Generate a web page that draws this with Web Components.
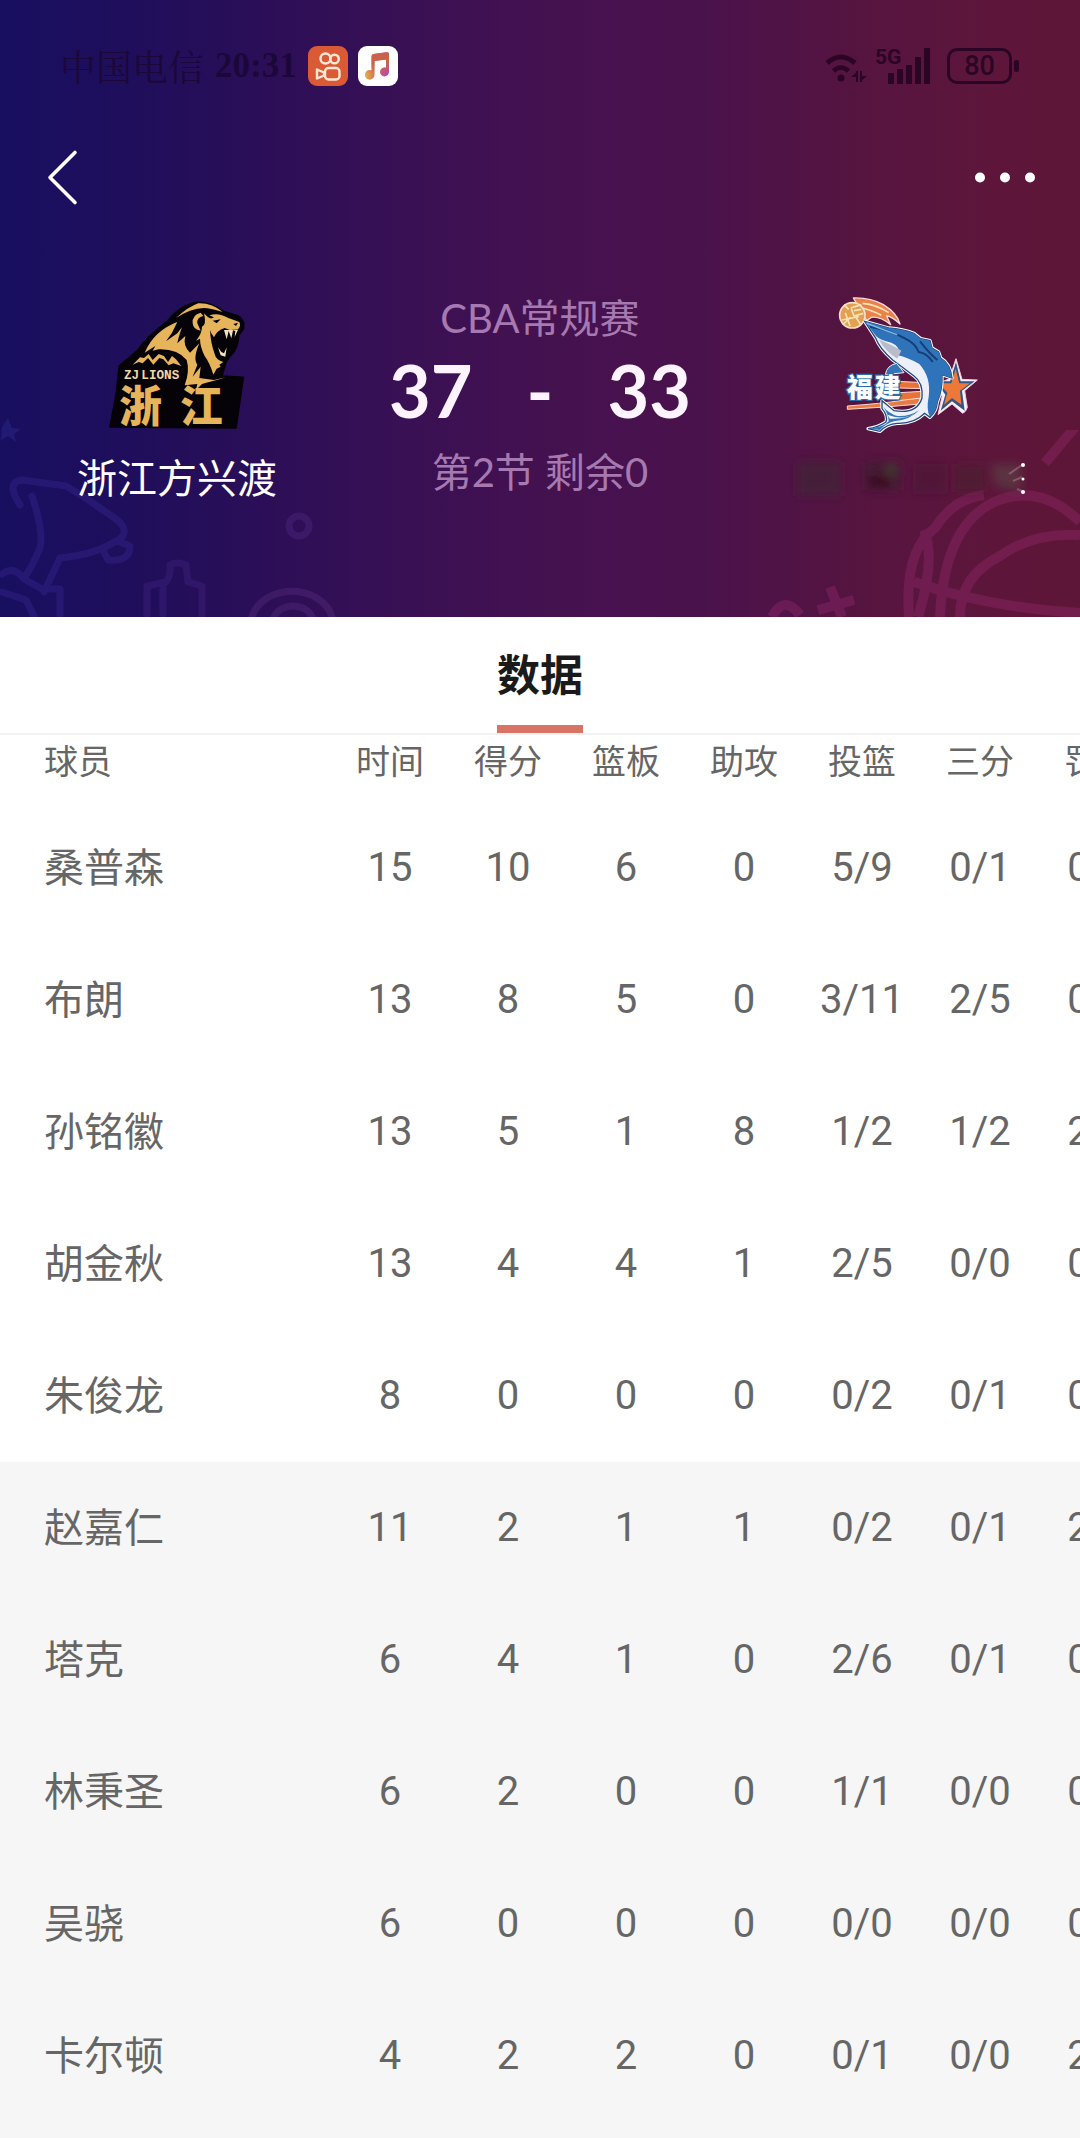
<!DOCTYPE html>
<html lang="zh-CN">
<head>
<meta charset="utf-8">
<meta name="viewport" content="width=device-width, initial-scale=1">
<title>CBA常规赛 数据</title>
<style>
html{background:#f6f6f6}
body{margin:0;min-height:100vh;font-family:Lato,"Noto Sans CJK SC",sans-serif;color:#666;overflow-x:hidden}
</style>
</head>
<body>
<game-page></game-page>
<script>
const define = (name, html, setup) => {
  const tpl = document.createElement('template');
  tpl.innerHTML = html;
  customElements.define(name, class extends HTMLElement {
    constructor() {
      super();
      this.attachShadow({ mode: 'open' }).appendChild(tpl.content.cloneNode(true));
    }
    connectedCallback() { if (setup) setup.call(this, this.shadowRoot); }
  });
};

define('status-bar', `
<style>
:host{display:flex;justify-content:space-between;align-items:center;height:132px;padding:0 61px 0 60px;color:#1c0838}
.side{display:flex;align-items:center}
.left{gap:11px}
.carrier{font:400 36px/40px "Noto Serif CJK SC","Noto Sans CJK SC",sans-serif}
.time{font:700 35px/40px "Liberation Serif",serif}
.apps{display:flex;gap:10px}
svg{display:block}
.right{color:#2b0526}
.cell{display:flex;margin-left:7px;align-items:flex-start}
.gen{font:700 21px/20px Roboto,sans-serif;width:26px;height:38px}
.bars{margin:0 0 0 -13px}
.batt{box-sizing:border-box;width:65px;height:36px;border:3px solid currentColor;border-radius:10px;margin-left:16px;font:500 27px/30px Roboto,sans-serif;text-align:center}
.nub{width:5px;height:12px;border-radius:2px;background:currentColor;margin-left:2px}
</style>
<div class="side left">
  <span class="carrier">中国电信</span><span class="time">20:31</span>
  <span class="apps">
    <svg width="40" height="40" viewBox="0 0 40 40"><rect width="40" height="40" rx="9" fill="#d95a35"/><g fill="none" stroke="#ffe9d6" stroke-width="2.4" stroke-linejoin="round"><circle cx="17.5" cy="12.5" r="5"/><circle cx="26.500" cy="13" r="4.300"/><rect x="17" y="22" width="14.500" height="11.500" rx="3.500"/><path d="M9 23.500l7 3v3l-7 3z"/></g></svg>
    <svg width="40" height="40" viewBox="0 0 40 40"><defs><linearGradient id="m" x1="0" y1="1" x2="1" y2="1"><stop offset="0" stop-color="#e5b54a"/><stop offset=".5" stop-color="#d0655a"/><stop offset="1" stop-color="#b044bb"/></linearGradient><linearGradient id="n" x1="0" y1="0" x2="0" y2="1"><stop offset="0" stop-color="#c9644a"/><stop offset=".4" stop-color="#c9644a"/><stop offset=".8" stop-color="#c9644a" stop-opacity="0"/></linearGradient></defs><rect width="40" height="40" rx="9" fill="#fff"/><path d="M13.500 10.500q0-2 2-2.400l13-1.800q2.500-.3 2.500 2V26a4.500 4.500 0 1 1-3-4.300V13.500l-11.500 1.600V29a4.800 4.800 0 1 1-3-4.600z" fill="url(#m)"/><path d="M13.500 10.500q0-2 2-2.400l13-1.800q2.500-.3 2.500 2V26a4.500 4.500 0 1 1-3-4.300V13.500l-11.500 1.600V29a4.800 4.800 0 1 1-3-4.600z" fill="url(#n)"/></svg>
  </span>
</div>
<div class="side right">
  <svg width="42" height="38" viewBox="0 0 42 38" fill="none" stroke="currentColor"><path d="M1 16Q15 4 29 16" stroke-width="5"/><path d="M7.500 24q7.500-7 15 0" stroke-width="4.500"/><circle cx="15" cy="31" r="3.500" fill="currentColor" stroke="none"/><path d="M31 24v11M35 24v11" stroke-width="2"/><path d="M25 30l6-5v5zM41 29l-6 5v-5z" fill="currentColor" stroke="none"/></svg>
  <div class="cell"><span class="gen">5G</span>
  <svg class="bars" width="43" height="38" viewBox="0 0 43 38" fill="currentColor"><rect y="26" width="6" height="11"/><rect x="9" y="22" width="6" height="15"/><rect x="18" y="18" width="6" height="19"/><rect x="27" y="10" width="6" height="27"/><rect x="36" y="1" width="6" height="36"/></svg></div>
  <div class="batt">80</div><div class="nub"></div>
</div>`);

define('nav-bar', `
<style>
:host{display:flex;justify-content:space-between;align-items:center;height:92px;padding:0 44px}
button{border:0;background:none;padding:0;color:#fff;cursor:pointer}
svg{display:block}
</style>
<button aria-label="返回"><svg width="36" height="60" viewBox="0 0 36 60" fill="none" stroke="#fff" stroke-width="3.600" stroke-linecap="round" stroke-linejoin="round"><path d="M31 4.500L6 29.500l25 25"/></svg></button>
<button aria-label="更多"><svg width="62" height="60" viewBox="0 0 62 60" fill="#fff"><circle cx="6" cy="29.500" r="5"/><circle cx="31" cy="29.500" r="5"/><circle cx="56" cy="29.500" r="5"/></svg></button>`);

define('lions-logo', `
<style>
:host{display:block}
svg{display:block;overflow:visible}
.city{font:900 128px "Noto Sans CJK SC",sans-serif;fill:#e6b45a}
.club{font:700 38px "Liberation Mono",monospace;fill:#efd9a6}
</style>
<svg width="150" height="130" viewBox="36 60 450 390" role="img" aria-label="浙江">
<path d="M60 441L78 345 88 258 142 212Q170 170 232 124 264 82 312 68 355 62 400 94L445 108Q467 124 460 148L446 166Q444 204 424 224L409 244 396 288 460 292 438 444Z" fill="#050208" stroke="#050208" stroke-width="5" stroke-linejoin="round"/>
<g fill="#e6b45a">
<path d="M258 114Q295 80 325 70 365 68 398 96 360 84 342 84 300 86 258 114Z"/>
<path d="M308 130Q306 104 332 98L340 108Q320 112 322 130L332 152Q310 150 308 130Z"/>
<path d="M342 100Q360 122 372 112L358 106Q385 96 415 114L448 126Q454 138 444 148L420 150 404 144Q380 152 372 172 362 160 360 150 362 190 374 222 378 240 400 246L388 254 392 260 380 266 370 284Q360 250 344 228 330 200 330 176L318 182Q336 160 336 140 350 136 342 100Z"/>
<path d="M164 218Q192 152 262 126L246 158 228 184 262 160 276 142Q264 176 262 190L286 168Q278 198 300 218L328 190Q308 236 322 254L308 290 332 260 328 294 372 300 408 292Q366 304 336 312L318 330 322 312 284 316Q300 274 290 240 262 206 206 208L188 212 196 198Z"/>
<path d="M128 254L150 232 162 234 176 222 188 240 206 222 222 228 234 246 246 228 258 238 274 258 250 250 236 256 220 238 208 234 190 254 174 234 158 250 146 246Z"/>
</g>
<path d="M368 122l24-4-12 12zM430 132l14-4-6 10z" fill="#050208"/>
<path d="M402 150l8 28 6-25 8 22 5-24 7 2-2 18 10-22zM384 202l8 24 14 4 4-28-8 18-8-4z" fill="#f3e4bb"/>
<text class="club" x="102" y="298">ZJ</text>
<text class="club" x="154" y="298">LIONS</text>
<text class="city" x="88" y="425">浙</text><text class="city" x="270" y="425">江</text>
</svg>`);

define('marlin-logo', `
<style>
:host{display:block}
svg{display:block;overflow:visible}
text{font:900 78px "Noto Sans CJK SC",sans-serif}
</style>
<svg width="150" height="130" viewBox="24 60 450 390" role="img" aria-label="福建">
<path d="M100 54Q150 52 190 74 232 100 240 132 214 108 200 108L212 134Q180 108 154 112L140 122Z" fill="#e8844a" stroke="#fbd9d4" stroke-width="4" stroke-linejoin="round"/>
<path d="M128 70Q170 74 206 98M126 84Q160 92 184 106" fill="none" stroke="#ffe2b8" stroke-width="5"/>
<circle cx="97" cy="106" r="38" fill="#e2a052" stroke="#f7dfca" stroke-width="5"/>
<path d="M92 84l32-10M94 86l8 22 28-8M76 98l14 40M108 112l14 22M66 120l50-10M72 74l14 14M68 134l24-22M102 92l22-4" stroke="#fbe3b4" stroke-width="5" fill="none"/>
<path d="M408 236L426 298 472 300 434 332 442 382Q438 396 428 400L396 372 354 404 366 350 356 310 388 296Z" fill="#f7f2fb" stroke="#f6c8dc" stroke-width="3"/>
<path d="M408 246L422 304 464 304 426 332 434 392 396 364 362 392 376 344 348 304 390 304Z" fill="#355685"/>
<path d="M407 266L418 310 450 310 420 332 424 374 396 354 372 374 382 338 356 310 394 310Z" fill="#ee7837"/>
<path d="M82 378Q190 370 240 362L300 344V372Q200 382 82 388Z" fill="#e87b43" stroke="#fbd9d4" stroke-width="3"/>
<path d="M230 304L316 308V326L236 324ZM238 338L308 334 304 354 236 362Z" fill="#e87338" stroke="#fbd9d4" stroke-width="3"/>
<path d="M134 124L206 144Q250 148 282 160L302 176 330 182 336 204 356 216 362 234Q392 252 396 294L366 284Q368 330 352 366 350 394 330 412L314 400Q282 432 232 430 200 432 180 454L144 446Q174 442 198 426 204 406 186 386L186 362 222 392Q290 404 306 354 310 308 282 288 248 262 218 240 178 204 168 176Z" fill="#f7f5fc" stroke="#fff" stroke-width="10" stroke-linejoin="round"/>
<path d="M134 124L206 144Q250 148 282 160L302 176 330 182 336 204 356 216 362 234Q392 252 396 294L366 284Q368 330 352 366 350 394 330 412L314 400Q282 432 232 430 200 432 180 454L144 446Q174 442 198 426 204 406 186 386L186 362 222 392Q290 404 306 354 310 308 282 288 248 262 218 240 178 204 168 176Z" fill="#eef0f9" stroke="#234a80" stroke-width="4"/>
<path d="M134 124L206 144Q250 148 282 160L302 176 330 182 336 204 356 216 362 234Q392 252 396 294L366 284Q368 330 352 366 350 394 330 410 318 390 326 350 334 292 298 252 262 232 234 226 244 200 214 188 180 180 168 168Z" fill="#2f74bb"/>
<path d="M150 140Q210 150 256 176 286 190 296 216 322 220 338 246M300 184Q330 222 352 240" fill="none" stroke="#153e77" stroke-width="6"/>
<path d="M140 130Q190 150 232 164" stroke="#77b6e0" stroke-width="5" fill="none"/>
<path d="M176 178Q196 216 232 236L244 212Q218 196 176 178Z" fill="#b8bccb"/>
<path d="M196 284Q200 256 230 250L252 278Z" fill="#3375b5" stroke="#e5f0fa" stroke-width="3"/>
<path d="M150 446Q194 440 206 424 206 404 190 380 206 400 232 408 270 410 298 390 270 420 222 424 198 430 180 450Z" fill="#3477b7"/>
<path d="M202 404Q254 424 292 396 264 418 210 416Z" fill="#f6f6fc"/>
<g fill="#fff" stroke="#2c6fa7" stroke-width="7" paint-order="stroke"><text x="80" y="350">福</text><text x="164" y="350">建</text></g>
</svg>`);

define('team-card', `
<style>
:host{display:flex;flex-direction:column;align-items:center;gap:24px;padding-top:6px;color:#fff}
.name{font-size:40px;line-height:48px;white-space:nowrap}
</style>
<slot name="logo"></slot><div class="name"><slot></slot></div>`);

define('masked-name', `
<style>:host{display:block}svg{display:block;overflow:visible}</style>
<svg width="240" height="48" viewBox="-8 0 240 48" aria-hidden="true">
<defs><filter id="b" x="-20%" y="-50%" width="140%" height="200%"><feGaussianBlur stdDeviation="4"/></filter></defs>
<g filter="url(#b)"><rect x="6" y="8" width="44" height="34" fill="#3d2334" opacity=".6"/><rect x="74" y="8" width="36" height="28" fill="#38202e" opacity=".6"/><circle cx="100" cy="16" r="7" fill="#45402e" opacity=".7"/><rect x="78" y="22" width="20" height="12" fill="#3a0720"/><rect x="122" y="10" width="34" height="30" fill="#45152f" opacity=".5"/><rect x="164" y="10" width="30" height="28" fill="#47202b" opacity=".6"/><path d="M200 10h30v28l-26-6z" fill="#5a3040"/></g>
<path d="M218 20l13-9M222 27l9-4M226 35l5 2" stroke="#c993ad" stroke-width="2" opacity=".4"/><g fill="#fff"><circle cx="232" cy="11" r="2"/><circle cx="232" cy="25" r="1.500"/><circle cx="232" cy="38" r="2"/></g>
</svg>`);

define('score-board', `
<style>
:host{display:flex;flex-direction:column;align-items:center;color:#a679b0;font-size:40px;line-height:48px;white-space:nowrap}
.score{display:flex;justify-content:center;gap:54px;color:#fdf4ff;font-size:72px;font-weight:700;line-height:96px;height:106px}
</style>
<div><slot name="league"></slot></div>
<div class="score"><slot name="home"></slot><span>-</span><slot name="away"></slot></div>
<div><slot name="clock"></slot></div>`);

define('hero-art', `
<style>
:host{position:absolute;inset:0;overflow:hidden;display:flex;justify-content:space-between;align-items:flex-end;pointer-events:none}
svg{display:block;flex:none}
</style>
<svg width="360" height="217" viewBox="0 0 360 217" fill="none" stroke="#4432a8" stroke-opacity=".28" stroke-width="7" stroke-linejoin="round" stroke-linecap="round">
<path d="M2 27l6-9 4 10 9 1-7 5 2 8-8-6-7 4z" fill="#33309f" stroke="none" fill-opacity=".35"/>
<path d="M20 105Q5 82 22 80L66 86 84 97M32 96Q44 132 40 148 33 165 26 175M84 97L116 119Q132 132 117 141L130 146Q130 162 108 160L104 152M116 141Q94 155 60 158L44 192M2 174q12-9 22 5l18 10 18 0v26M2 192l24 8 8 16"/>
<path d="M147 217V186L166 182Q171 176 170 165 177 161 186 165L188 182 202 186V217M163 188v26" stroke="#573299" stroke-opacity=".24"/>
<circle cx="299" cy="126" r="10" stroke="#56338d" stroke-opacity=".32"/>
<path d="M252 217a41 33 0 0 1 80 0M274 217a20 16 0 0 1 38 0" stroke="#67398c" stroke-opacity=".3" stroke-width="7"/>
</svg>
<svg width="340" height="187" viewBox="0 0 340 187" fill="none" stroke="#9c2d74" stroke-opacity=".34" stroke-width="10">
<path d="M305 33L336-4M169 187Q164 120 195 98 214 68 244 65M184 100Q196 130 178 187M200 187Q204 96 254 72 300 52 340 92M220 187Q220 146 260 126 294 102 340 105M174 152Q245 177 340 183"/>
<path d="M32 187q12-23 28-2M78 180l36-10M90 157l12 30"/>
</svg>`);

define('match-hero', `
<style>
:host{display:block;position:relative;color:#fff;background:linear-gradient(90deg,#180f60 0%,#1f0e5c 12%,#2b0e58 24%,#371054 36%,#441150 50%,#4a124c 65%,#551440 79%,#5d163b 91%,#5d1637 100%)}
.content{position:relative}
.match{display:grid;grid-template-columns:19fr 20fr 19fr;padding:70px 0 115px}
</style>
<hero-art></hero-art>
<div class="content">
<status-bar></status-bar>
<nav-bar></nav-bar>
<div class="match">
  <team-card><lions-logo slot="logo"></lions-logo>浙江方兴渡</team-card>
  <score-board><span slot="league">CBA常规赛</span><span slot="home">37</span><span slot="away">33</span><span slot="clock">第2节 剩余0</span></score-board>
  <team-card><marlin-logo slot="logo"></marlin-logo><masked-name></masked-name></team-card>
</div>
</div>`);

define('tab-strip', `
<style>
:host{display:flex;justify-content:center;background:#fff;border-bottom:2px solid #f2f2f2}
button{height:116px;padding:8px 0 0;border:0;border-bottom:8px solid #d87466;background:none;color:#1a1a1a;font:700 43px/60px Lato,"Noto Sans CJK SC",sans-serif;cursor:pointer}
</style>
<button role="tab" aria-selected="true"><slot></slot></button>`);

define('player-stats', `
<style>
:host{display:block;overflow-x:auto;scrollbar-width:none;color:#666}
:host::-webkit-scrollbar{display:none}
table{table-layout:fixed;width:1157px;border-collapse:collapse}
.who{width:331px}
th,td{box-sizing:border-box;padding:0;text-align:center;font-weight:400;white-space:nowrap}
thead,.start{background:#fff}
thead th{height:67px;padding-top:2px;vertical-align:top;font-size:34px;line-height:48px}
tbody th,tbody td{height:132px;font-size:40px;line-height:48px}
tbody th{padding-bottom:2px}
tbody td{font-family:Roboto,sans-serif}
th:first-child{text-align:left;padding-left:44px}
.bench{background:#f6f6f6}
</style>
<table><colgroup><col class="who"><col span="7"></colgroup><thead><tr></tr></thead><tbody class="start"></tbody><tbody class="bench"></tbody></table>`,
function (root) {
  const cell = (tag, text, scope) => {
    const el = document.createElement(tag);
    el.textContent = text;
    if (scope) el.scope = scope;
    return el;
  };
  const heads = ['球员', '时间', '得分', '篮板', '助攻', '投篮', '三分', '罚球'];
  root.querySelector('thead tr').replaceChildren(...heads.map(h => cell('th', h, 'col')));
  const players = [
    ['桑普森', 15, 10, 6, 0, '5/9', '0/1', '0/0'],
    ['布朗', 13, 8, 5, 0, '3/11', '2/5', '0/0'],
    ['孙铭徽', 13, 5, 1, 8, '1/2', '1/2', '2/2'],
    ['胡金秋', 13, 4, 4, 1, '2/5', '0/0', '0/0'],
    ['朱俊龙', 8, 0, 0, 0, '0/2', '0/1', '0/0'],
    ['赵嘉仁', 11, 2, 1, 1, '0/2', '0/1', '2/2'],
    ['塔克', 6, 4, 1, 0, '2/6', '0/1', '0/0'],
    ['林秉圣', 6, 2, 0, 0, '1/1', '0/0', '0/0'],
    ['吴骁', 6, 0, 0, 0, '0/0', '0/0', '0/0'],
    ['卡尔顿', 4, 2, 2, 0, '0/1', '0/0', '2/2']
  ];
  const rows = players.map(([name, ...stats]) => {
    const tr = document.createElement('tr');
    tr.append(cell('th', name, 'row'), ...stats.map(s => cell('td', s)));
    return tr;
  });
  root.querySelector('.start').replaceChildren(...rows.slice(0, 5));
  root.querySelector('.bench').replaceChildren(...rows.slice(5));
});

define('game-page', `
<style>:host{display:block}</style>
<match-hero></match-hero>
<tab-strip>数据</tab-strip>
<player-stats></player-stats>`);
</script>
</body>
</html>
